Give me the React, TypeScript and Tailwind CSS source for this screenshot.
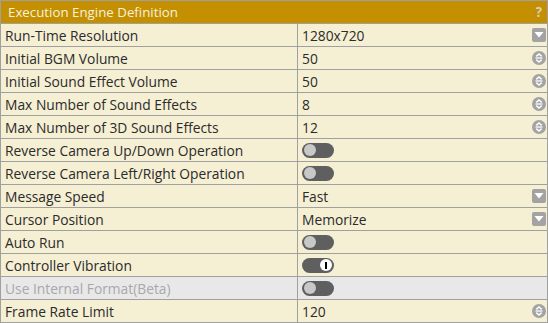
import React from 'react';

type Kind = 'select' | 'number' | 'toggle';

interface Row {
  label: string;
  kind: Kind;
  value?: string;
  on?: boolean;
  disabled?: boolean;
}

const rows: Row[] = [
  { label: 'Run-Time Resolution', kind: 'select', value: '1280x720' },
  { label: 'Initial BGM Volume', kind: 'number', value: '50' },
  { label: 'Initial Sound Effect Volume', kind: 'number', value: '50' },
  { label: 'Max Number of Sound Effects', kind: 'number', value: '8' },
  { label: 'Max Number of 3D Sound Effects', kind: 'number', value: '12' },
  { label: 'Reverse Camera Up/Down Operation', kind: 'toggle' },
  { label: 'Reverse Camera Left/Right Operation', kind: 'toggle' },
  { label: 'Message Speed', kind: 'select', value: 'Fast' },
  { label: 'Cursor Position', kind: 'select', value: 'Memorize' },
  { label: 'Auto Run', kind: 'toggle' },
  { label: 'Controller Vibration', kind: 'toggle', on: true },
  { label: 'Use Internal Format(Beta)', kind: 'toggle', disabled: true },
  { label: 'Frame Rate Limit', kind: 'number', value: '120' },
];

const SelectIcon = () => (
  <svg width="14" height="14" viewBox="0 0 14 14">
    <rect x="0" y="0" width="14" height="14" rx="2" fill="#a3a3a3" />
    <path d="M2.5 4 L11.5 4 L7 9.5 Z" fill="#ffffff" />
  </svg>
);

const SpinIcon = () => (
  <svg width="14" height="14" viewBox="0 0 14 14">
    <circle cx="7" cy="7" r="7" fill="#a3a3a3" />
    <path d="M4.3 5.4 L7 3 L9.7 5.4" stroke="#ffffff" strokeWidth="1.5" fill="none" />
    <path d="M3.5 7 H10.5" stroke="#ffffff" strokeWidth="1.3" />
    <path d="M4.3 8.6 L7 11 L9.7 8.6" stroke="#ffffff" strokeWidth="1.5" fill="none" />
  </svg>
);

const Toggle = ({ on }: { on?: boolean }) => (
  <div
    className={`w-[32px] h-[15px] rounded-full bg-[#5f5f5f] flex items-center px-[2px] ${
      on ? 'justify-end' : 'justify-start'
    }`}
  >
    {on ? (
      <div className="w-[12px] h-[12px] rounded-full bg-white flex items-center justify-center">
        <div className="w-[2px] h-[7px] bg-black" />
      </div>
    ) : (
      <div className="w-[12px] h-[12px] rounded-full bg-[#c8c8c8]" />
    )}
  </div>
);

export default function App() {
  return (
    <div className="w-[548px] h-[323px] border border-[#a0a0a0] bg-[#f5efd4] text-[13.8px] text-[#2b2b2b] font-['Open_Sans',sans-serif] leading-none">
      <div className="h-[22px] bg-[#c48f00] flex items-center justify-between pl-[7px] pr-[5px] pt-[1px] text-[13.3px] text-[#f7f1dc]">
        <span>Execution Engine Definition</span>
        <span className="font-bold text-[#d8d0b8]">?</span>
      </div>
      {rows.map((r) => (
        <div
          key={r.label}
          className={`h-[23px] flex border-t border-[#a0a0a0] ${r.disabled ? 'bg-[#e8e8e8]' : ''}`}
        >
          <div
            className={`w-[297px] border-r border-[#a0a0a0] flex items-center pl-[4px] pt-[1px] ${
              r.disabled ? 'text-[#a8a8a8]' : ''
            }`}
          >
            {r.label}
          </div>
          <div className="flex-1 flex items-center justify-between pl-[4px] pr-[1px]">
            {r.kind === 'toggle' ? (
              <Toggle on={r.on} />
            ) : (
              <>
                <span className="pt-[1px]">{r.value}</span>
                {r.kind === 'select' ? <SelectIcon /> : <SpinIcon />}
              </>
            )}
          </div>
        </div>
      ))}
    </div>
  );
}
